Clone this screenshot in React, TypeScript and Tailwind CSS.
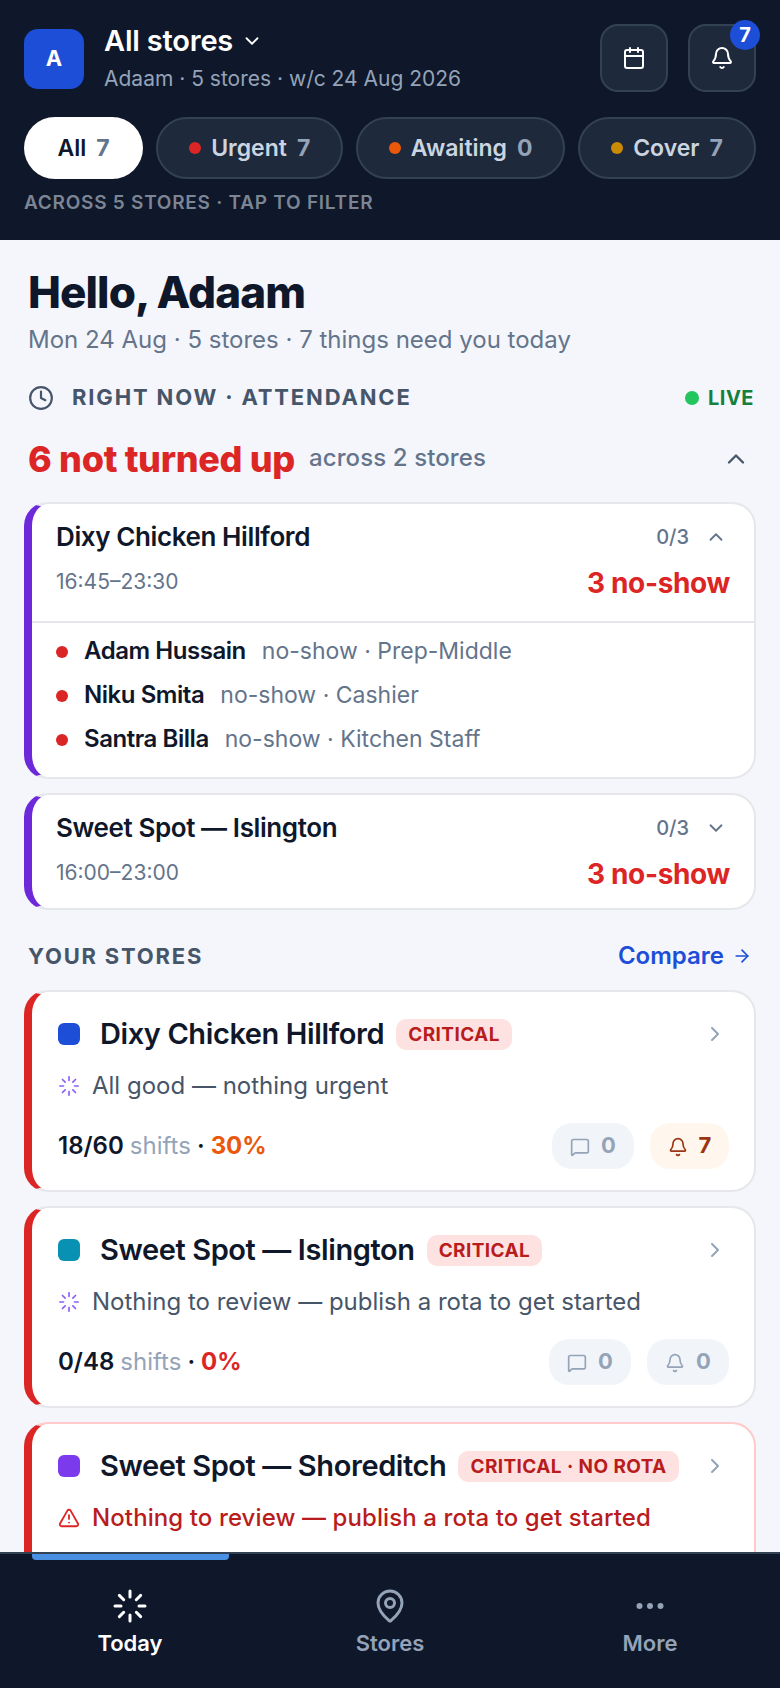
import React from 'react';
import {
  ArrowRight,
  Bell,
  Calendar,
  ChevronDown,
  ChevronRight,
  ChevronUp,
  Clock,
  Ellipsis,
  Loader,
  MapPin,
  MessageSquare,
  TriangleAlert,
} from 'lucide-react';

const chips = [
  { label: 'Urgent', count: 7, dot: 'bg-[#dc2626]', width: 'w-[188px]' },
  { label: 'Awaiting', count: 0, dot: 'bg-[#ea580c]', width: 'w-[210px]' },
  { label: 'Cover', count: 7, dot: 'bg-[#ca8a04]', width: 'w-[179px]' },
];

const noShows = [
  { name: 'Adam Hussain', role: 'no-show · Prep-Middle' },
  { name: 'Niku Smita', role: 'no-show · Cashier' },
  { name: 'Santra Billa', role: 'no-show · Kitchen Staff' },
];

const Pill: React.FC<{ kind: 'msg' | 'bell'; value: number; warm?: boolean; w: string }> = ({ kind, value, warm, w }) => {
  const Icon = kind === 'msg' ? MessageSquare : Bell;
  return (
    <div className={`flex h-[46px] items-center justify-center gap-[11px] rounded-[20px] ${w} ${warm ? 'bg-[#fff7ed] text-[#9a3412]' : 'bg-[#f1f5f9] text-[#94a3b8]'}`}>
      <Icon size={20} strokeWidth={2} className="mt-[2px]" />
      <span className="mb-[2px] text-[22px] font-bold leading-none">{value}</span>
    </div>
  );
};

const ShiftCard: React.FC<{ name: string; time: string; open?: boolean }> = ({ name, time, open }) => (
  <div className="overflow-hidden rounded-[24px] border-2 border-l-8 border-[#e5e7eb] border-l-[#6d28d9] bg-white">
    <div className={`px-6 pt-[17px] ${open ? 'pb-[20px]' : 'pb-[16px]'}`}>
      <div className="flex items-center justify-between">
        <span className="text-[26px] leading-[32px] font-semibold tracking-[-0.4px] text-[#0f172a]">{name}</span>
        <span className="flex items-center gap-[16px] text-[20px] font-medium text-[#64748b]">
          0/3
          {open ? <ChevronUp size={22} strokeWidth={2} className="mr-[3px]" /> : <ChevronDown size={22} strokeWidth={2} className="mr-[3px]" />}
        </span>
      </div>
      <div className="mt-[10px] flex items-center justify-between">
        <span className="text-[21px] leading-[28px] text-[#64748b]">{time}</span>
        <span className="mt-[2px] text-[28px] leading-[36px] font-bold tracking-[-0.35px] text-[#dc2626]">3 no-show</span>
      </div>
    </div>
    {open && (
      <div className="flex flex-col gap-[12px] border-t-2 border-[#e5e7eb] px-6 pt-[12px] pb-[22px]">
        {noShows.map(p => (
          <div key={p.name} className="flex h-[32px] items-center">
            <span className="mt-[2px] h-[12px] w-[12px] rounded-full bg-[#dc2626]" />
            <span className="ml-[16px] text-[24px] font-semibold tracking-[-0.45px] text-[#0f172a]">{p.name}</span>
            <span className="ml-[16px] text-[23px] text-[#64748b]">{p.role}</span>
          </div>
        ))}
      </div>
    )}
  </div>
);

const cardName = 'ml-[20px] text-[29px] leading-[36px] font-semibold tracking-[-0.4px] text-[#0f172a]';
const badge = 'ml-[12px] rounded-[10px] bg-[#fee2e2] px-[12px] py-[2px] text-[19px] leading-[27px] font-bold tracking-[0.4px] text-[#b91c1c]';

export default function App() {
  return (
    <div className="relative h-[1688px] w-[780px] overflow-hidden bg-[#f4f6fb] font-['Inter',sans-serif]">
      {/* top header */}
      <header className="h-[240px] bg-[#0f172a] px-6 pt-6">
        <div className="flex items-start justify-between">
          <div className="flex items-center gap-5">
            <div className="flex h-[60px] w-[60px] items-center justify-center rounded-[14px] bg-[#1d4ed8] text-[22px] font-bold text-white">A</div>
            <div>
              <div className="flex items-center gap-2 text-[29px] leading-[34px] font-semibold tracking-[-0.2px] text-white">
                All stores <ChevronDown size={22} strokeWidth={2} />
              </div>
              <div className="mt-[7px] text-[21px] leading-[28px] text-[#94a3b8]">Adaam · 5 stores · w/c 24 Aug 2026</div>
            </div>
          </div>
          <div className="flex gap-5">
            <button className="flex h-[68px] w-[68px] items-center justify-center rounded-[18px] border-2 border-[#334155] bg-[#1e293b] text-white">
              <Calendar size={24} strokeWidth={2} />
            </button>
            <button className="relative flex h-[68px] w-[68px] items-center justify-center rounded-[18px] border-2 border-[#334155] bg-[#1e293b] text-white">
              <Bell size={24} strokeWidth={2} />
              <span className="absolute top-[-6px] right-[-6px] flex h-[30px] w-[30px] items-center justify-center rounded-full bg-[#1d4ed8] text-[20px] font-bold text-white">7</span>
            </button>
          </div>
        </div>
        <div className="mt-6 flex gap-[13px]">
          <div className="flex h-[62px] w-[120px] items-center justify-center gap-[10px] rounded-full bg-white text-[23px] font-semibold text-[#0f172a]">
            All <span className="font-bold text-[#64748b]">7</span>
          </div>
          {chips.map(c => (
            <div key={c.label} className={`flex h-[62px] items-center justify-center rounded-full border-2 border-[#334155] bg-[#1e293b] text-[23px] font-semibold text-[#cbd5e1] ${c.width}`}>
              <span className={`h-[12px] w-[12px] rounded-full ${c.dot}`} />
              <span className="ml-[10px]">{c.label}</span>
              <span className="ml-[10px] font-bold text-[#94a3b8]">{c.count}</span>
            </div>
          ))}
        </div>
        <div className="mt-[13px] text-[19px] leading-[22px] font-semibold tracking-[0.75px] text-[#7c8594]">ACROSS 5 STORES · TAP TO FILTER</div>
      </header>

      <main className="px-6">
        <div className="px-[4px] pt-[25px]">
          <h1 className="text-[44px] leading-[54px] font-extrabold tracking-[-0.9px] text-[#0f172a]">Hello, Adaam</h1>
          <p className="mt-[5px] text-[24px] leading-[32px] text-[#64748b]">Mon 24 Aug · 5 stores · 7 things need you today</p>
        </div>

        <div className="mt-[25px] flex items-center justify-between pr-[2px] pl-[4px]">
          <div className="flex items-center gap-[18px]">
            <Clock size={26} strokeWidth={2} className="text-[#475569]" />
            <span className="text-[22px] font-bold tracking-[1.85px] text-[#475569]">RIGHT NOW · ATTENDANCE</span>
          </div>
          <div className="flex items-center gap-[9px]">
            <span className="h-[14px] w-[14px] rounded-full bg-[#22c55e]" />
            <span className="text-[20px] font-bold tracking-[0.5px] text-[#15803d]">LIVE</span>
          </div>
        </div>

        <div className="mt-[23px] flex items-center justify-between pr-[6px] pl-[4px]">
          <div className="flex items-center gap-[14px]">
            <span className="text-[36px] leading-[44px] font-extrabold tracking-[-0.3px] text-[#dc2626]">6 not turned up</span>
            <span className="mb-[2px] text-[24px] font-medium tracking-[0.1px] text-[#64748b]">across 2 stores</span>
          </div>
          <ChevronUp size={28} strokeWidth={2} className="text-[#475569]" />
        </div>

        <div className="mt-[21px] flex flex-col gap-[14px]">
          <ShiftCard name="Dixy Chicken Hillford" time="16:45–23:30" open />
          <ShiftCard name="Sweet Spot — Islington" time="16:00–23:00" />
        </div>

        <div className="mt-[28px] flex items-center justify-between pr-[4px] pl-[4px]">
          <span className="text-[22px] font-bold tracking-[1.8px] text-[#475569]">YOUR STORES</span>
          <span className="flex items-center gap-[8px] text-[24px] font-semibold text-[#1d4ed8]">
            Compare <ArrowRight size={20} strokeWidth={2} />
          </span>
        </div>

        <div className="mt-[16px] flex flex-col gap-[14px]">
          <div className="rounded-[24px] border-2 border-l-8 border-[#e5e7eb] border-l-[#dc2626] bg-white pt-[24px] pr-[25px] pb-[21px] pl-[26px]">
            <div className="flex items-center">
              <span className="h-[22px] w-[22px] rounded-[6px] bg-[#1d4ed8]" />
              <span className={cardName}>Dixy Chicken Hillford</span>
              <span className={badge}>CRITICAL</span>
              <ChevronRight size={24} strokeWidth={2} className="mr-[2px] ml-auto text-[#94a3b8]" />
            </div>
            <div className="mt-[18px] flex items-center gap-[12px] text-[24px] leading-[32px] text-[#475569]">
              <Loader size={22} strokeWidth={1.8} className="text-[#8b5cf6]" />
              All good — nothing urgent
            </div>
            <div className="mt-[21px] flex items-center justify-between">
              <div className="text-[24px] font-semibold text-[#0f172a]">
                18/60 <span className="font-normal text-[#94a3b8]">shifts</span> · <span className="font-bold text-[#ea580c]">30%</span>
              </div>
              <div className="flex gap-[16px]">
                <Pill kind="msg" value={0} w="w-[82px]" />
                <Pill kind="bell" value={7} warm w="w-[79px]" />
              </div>
            </div>
          </div>

          <div className="rounded-[24px] border-2 border-l-8 border-[#e5e7eb] border-l-[#dc2626] bg-white pt-[24px] pr-[25px] pb-[21px] pl-[26px]">
            <div className="flex items-center">
              <span className="h-[22px] w-[22px] rounded-[6px] bg-[#0891b2]" />
              <span className={cardName}>Sweet Spot — Islington</span>
              <span className={badge}>CRITICAL</span>
              <ChevronRight size={24} strokeWidth={2} className="mr-[2px] ml-auto text-[#94a3b8]" />
            </div>
            <div className="mt-[18px] flex items-center gap-[12px] text-[24px] leading-[32px] text-[#475569]">
              <Loader size={22} strokeWidth={1.8} className="text-[#8b5cf6]" />
              Nothing to review — publish a rota to get started
            </div>
            <div className="mt-[21px] flex items-center justify-between">
              <div className="text-[24px] font-semibold text-[#0f172a]">
                0/48 <span className="font-normal text-[#94a3b8]">shifts</span> · <span className="font-bold text-[#dc2626]">0%</span>
              </div>
              <div className="flex gap-[16px]">
                <Pill kind="msg" value={0} w="w-[82px]" />
                <Pill kind="bell" value={0} w="w-[82px]" />
              </div>
            </div>
          </div>

          <div className="rounded-[24px] border-2 border-l-8 border-[#fecaca] border-l-[#dc2626] bg-white pt-[24px] pr-[25px] pb-[90px] pl-[26px]">
            <div className="flex items-center">
              <span className="h-[22px] w-[22px] rounded-[6px] bg-[#7c3aed]" />
              <span className={cardName}>Sweet Spot — Shoreditch</span>
              <span className={badge}>CRITICAL · NO ROTA</span>
              <ChevronRight size={24} strokeWidth={2} className="mr-[2px] ml-auto text-[#94a3b8]" />
            </div>
            <div className="mt-[18px] flex items-center gap-[12px] text-[24px] leading-[32px] font-medium tracking-[0.1px] text-[#b91c1c]">
              <TriangleAlert size={22} strokeWidth={2} className="text-[#dc2626]" />
              Nothing to review — publish a rota to get started
            </div>
          </div>
        </div>
      </main>

      {/* bottom nav */}
      <nav className="absolute right-0 bottom-0 left-0 grid h-[136px] grid-cols-3 border-t-2 border-[#334155] bg-[#0f172a] pt-[34px]">
        <span className="absolute top-0 left-[32px] h-[6px] w-[197px] rounded-b-[4px] bg-[#4a90e2]" />
        <div className="flex flex-col items-center gap-[3px] text-[22px] font-semibold text-white">
          <Loader size={36} strokeWidth={2} />
          Today
        </div>
        <div className="flex flex-col items-center gap-[3px] text-[22px] font-semibold text-[#94a3b8]">
          <MapPin size={36} strokeWidth={2} />
          Stores
        </div>
        <div className="flex flex-col items-center gap-[3px] text-[22px] font-semibold text-[#94a3b8]">
          <Ellipsis size={36} strokeWidth={2} />
          More
        </div>
      </nav>
    </div>
  );
}
